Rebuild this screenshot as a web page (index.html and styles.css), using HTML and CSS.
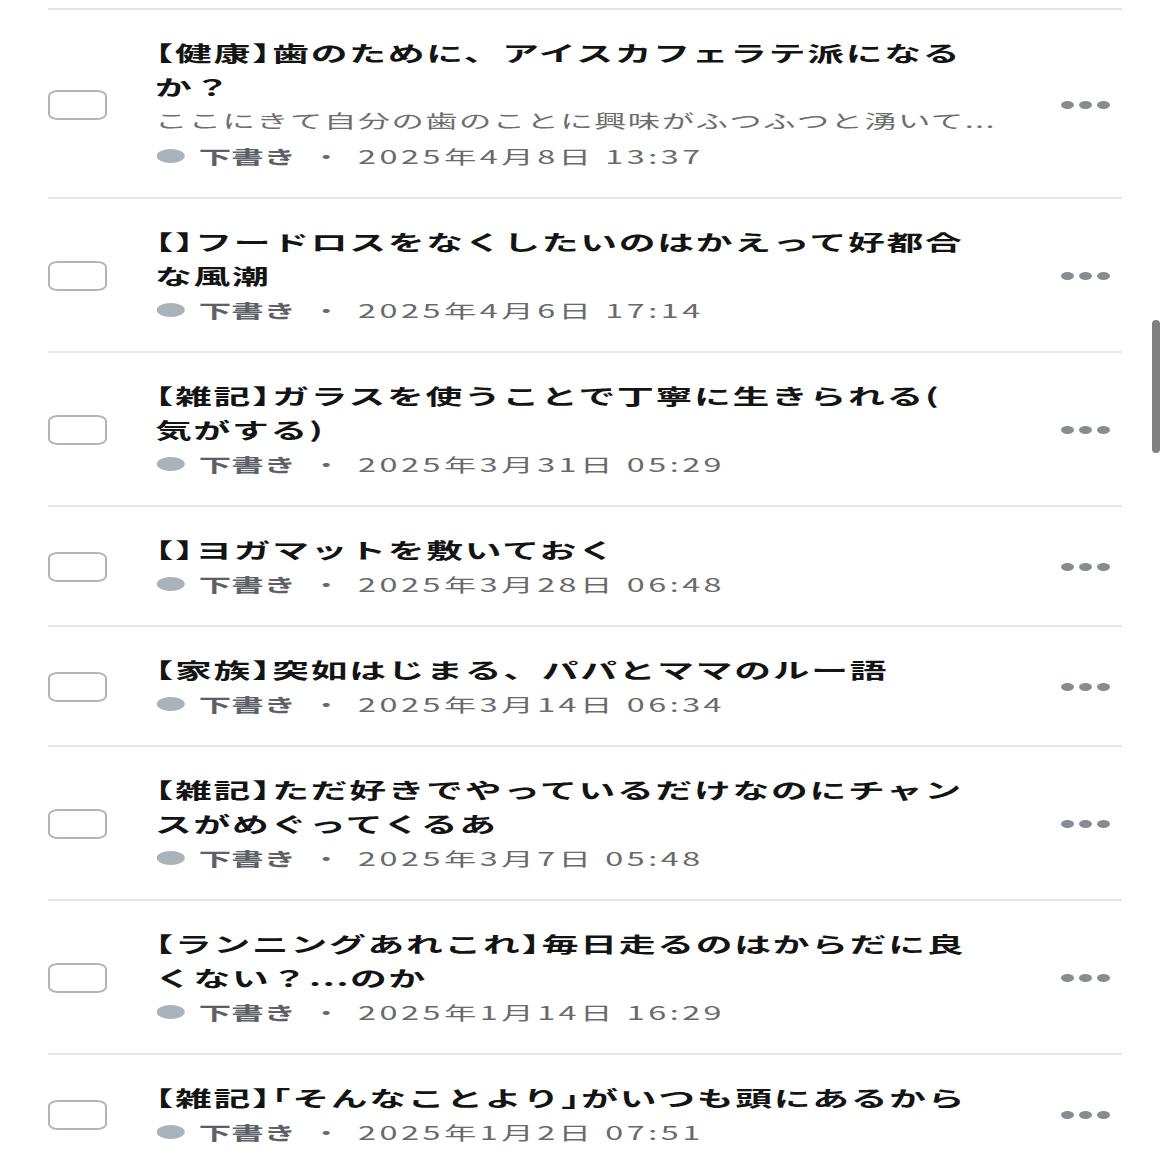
FILE: index.html
```html
<!DOCTYPE html>
<html lang="ja">
  <head>
    <meta charset="UTF-8" />
    <meta name="viewport" content="width=device-width, initial-scale=1.0" />
    <title>下書き一覧</title>
    <link rel="stylesheet" href="styles.css">
  </head>

  <body>
    <ul class="list">
      <li class="row">
        <span class="check"></span>
        <div class="body">
          <p class="title"><span class="tag">【健康】</span>歯のために、アイスカフェラテ派になるか？</p>
          <p class="excerpt">ここにきて自分の歯のことに興味がふつふつと湧いて...</p>
          <p class="meta"><span class="dot"></span><span class="status">下書き</span><span class="sep">・</span><span class="date">2025年4月8日 13:37</span></p>
        </div>
        <span class="more"><i></i><i></i><i></i></span>
      </li>
      <li class="row">
        <span class="check"></span>
        <div class="body">
          <p class="title"><span class="tag">【】</span>フードロスをなくしたいのはかえって好都合な風潮</p>
          <p class="meta"><span class="dot"></span><span class="status">下書き</span><span class="sep">・</span><span class="date">2025年4月6日 17:14</span></p>
        </div>
        <span class="more"><i></i><i></i><i></i></span>
      </li>
      <li class="row">
        <span class="check"></span>
        <div class="body">
          <p class="title"><span class="tag">【雑記】</span>ガラスを使うことで丁寧に生きられる(<br>気がする)</p>
          <p class="meta"><span class="dot"></span><span class="status">下書き</span><span class="sep">・</span><span class="date">2025年3月31日 05:29</span></p>
        </div>
        <span class="more"><i></i><i></i><i></i></span>
      </li>
      <li class="row">
        <span class="check"></span>
        <div class="body">
          <p class="title"><span class="tag">【】</span>ヨガマットを敷いておく</p>
          <p class="meta"><span class="dot"></span><span class="status">下書き</span><span class="sep">・</span><span class="date">2025年3月28日 06:48</span></p>
        </div>
        <span class="more"><i></i><i></i><i></i></span>
      </li>
      <li class="row">
        <span class="check"></span>
        <div class="body">
          <p class="title"><span class="tag">【家族】</span>突如はじまる、パパとママのルー語</p>
          <p class="meta"><span class="dot"></span><span class="status">下書き</span><span class="sep">・</span><span class="date">2025年3月14日 06:34</span></p>
        </div>
        <span class="more"><i></i><i></i><i></i></span>
      </li>
      <li class="row">
        <span class="check"></span>
        <div class="body">
          <p class="title"><span class="tag">【雑記】</span>ただ好きでやっているだけなのにチャンスがめぐってくるあ</p>
          <p class="meta"><span class="dot"></span><span class="status">下書き</span><span class="sep">・</span><span class="date">2025年3月7日 05:48</span></p>
        </div>
        <span class="more"><i></i><i></i><i></i></span>
      </li>
      <li class="row">
        <span class="check"></span>
        <div class="body">
          <p class="title"><span class="tag">【ランニングあれこれ】</span>毎日走るのはからだに良くない？...のか</p>
          <p class="meta"><span class="dot"></span><span class="status">下書き</span><span class="sep">・</span><span class="date">2025年1月14日 16:29</span></p>
        </div>
        <span class="more"><i></i><i></i><i></i></span>
      </li>
      <li class="row">
        <span class="check"></span>
        <div class="body">
          <p class="title"><span class="tag">【雑記】「</span>そんなことより<span class="tag">」</span>がいつも頭にあるから</p>
          <p class="meta"><span class="dot"></span><span class="status">下書き</span><span class="sep">・</span><span class="date">2025年1月2日 07:51</span></p>
        </div>
        <span class="more"><i></i><i></i><i></i></span>
      </li>
    </ul>

    <div class="scrollbar"></div>
  </body>
</html>
```

FILE: styles.css
```css
html,
body {
  margin: 0;
  padding: 0;
  background-color: #fff;
  font-family: "Noto Sans CJK JP", "Noto Sans", sans-serif;
  overflow: hidden;
}

.list {
  list-style: none;
  margin: 0;
  padding: 8px 48px 0 48px;
}

.row {
  display: flex;
  align-items: center;
  border-top: 2px solid #e6e6e6;
  padding: 25px 0 23px 0;
}

.check {
  flex: none;
  width: 55px;
  height: 26px;
  border: 2px solid #b4b4b4;
  border-radius: 10px / 6px;
  margin-right: 48px;
}

/* the screenshot is squeezed vertically, so text is widened to match */
.body {
  flex: none;
  width: 474px;
  transform: scaleX(1.75);
  transform-origin: 0 0;
}

.body p {
  margin: 0;
}

.title {
  font-size: 21px;
  line-height: 34px;
  font-weight: 700;
  letter-spacing: 1px;
  color: #141414;
}

.tag {
  font-feature-settings: "halt";
}

.excerpt {
  font-size: 18.5px;
  line-height: 35px;
  letter-spacing: 0.8px;
  color: #6e6e6e;
  white-space: nowrap;
}

.meta {
  display: flex;
  align-items: center;
  font-size: 18.5px;
  line-height: 36px;
  color: #6a6a6a;
  white-space: nowrap;
}

.dot {
  width: 16px;
  height: 14px;
  border-radius: 50%;
  background-color: #aab2ba;
  margin: 0 8px 0 1px;
}

.status {
  color: #5d6166;
  font-weight: 700;
}

.sep {
  margin: 0 9px 0 8px;
}

.date {
  letter-spacing: 2px;
}

.more {
  flex: none;
  display: flex;
  gap: 5px;
  margin-left: auto;
  margin-right: 12px;
}

.more i {
  width: 13px;
  height: 8px;
  border-radius: 50%;
  background-color: #878c91;
}

.scrollbar {
  position: fixed;
  top: 320px;
  right: 10px;
  width: 8px;
  height: 133px;
  border-radius: 4px;
  background-color: #808080;
}
```
